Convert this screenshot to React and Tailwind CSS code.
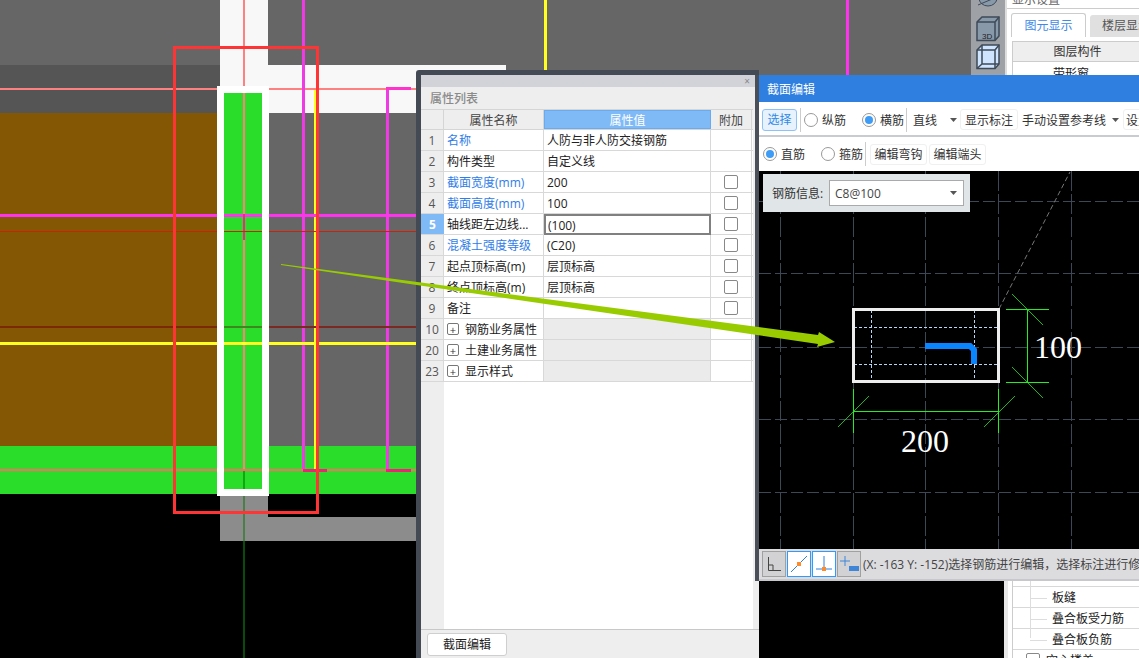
import React from "react";

const rows = [
  { no: 1, name: "名称", value: "人防与非人防交接钢筋", blue: true },
  { no: 2, name: "构件类型", value: "自定义线" },
  { no: 3, name: "截面宽度(mm)", value: "200", blue: true, check: true },
  { no: 4, name: "截面高度(mm)", value: "100", blue: true, check: true },
  { no: 5, name: "轴线距左边线...", value: "(100)", check: true, active: true },
  { no: 6, name: "混凝土强度等级", value: "(C20)", blue: true, check: true },
  { no: 7, name: "起点顶标高(m)", value: "层顶标高", check: true },
  { no: 8, name: "终点顶标高(m)", value: "层顶标高", check: true },
  { no: 9, name: "备注", value: "", check: true },
  { no: 10, name: "钢筋业务属性", group: true },
  { no: 20, name: "土建业务属性", group: true },
  { no: 23, name: "显示样式", group: true },
];

function Caret() {
  return (
    <svg width="7" height="4" viewBox="0 0 7 4" className="shrink-0">
      <path d="M0 0h7L3.5 4z" fill="#555" />
    </svg>
  );
}

function Radio({ checked, label, className }) {
  return (
    <>
      <span
        className={`flex w-[14px] h-[14px] shrink-0 items-center justify-center rounded-full border border-[#999] bg-white ${className}`}
      >
        {checked && <span className="w-[8px] h-[8px] rounded-full bg-[#3f9cf5]" />}
      </span>
      <span className="ml-[4px] w-[24px] shrink-0 pt-[2px] text-[#333]">{label}</span>
    </>
  );
}

function CadBackground() {
  return (
    <svg className="absolute inset-0" width="1139" height="658" viewBox="0 0 1139 658" shapeRendering="crispEdges">
      <rect x="0" y="0" width="1139" height="494" fill="#666666" />
      <rect x="0" y="65" width="220" height="48" fill="#555555" />
      <rect x="0" y="113" width="217" height="333" fill="#835703" />
      <rect x="220" y="0" width="48" height="113" fill="#f8f8f8" />
      <rect x="268" y="65" width="238" height="48" fill="#f8f8f8" />
      <rect x="0" y="446" width="1139" height="48" fill="#2bdd2b" />
      <rect x="0" y="494" width="1139" height="164" fill="#000000" />
      <rect x="220" y="494" width="48" height="47" fill="#8c8c8c" />
      <rect x="268" y="517" width="200" height="24" fill="#8c8c8c" />
      <rect x="243" y="494" width="2" height="47" fill="#4a7f4a" />
      <rect x="243" y="541" width="2" height="117" fill="#0a4a0a" />

      <rect x="0" y="88" width="416" height="2" fill="#ff8080" />
      <rect x="243" y="0" width="2" height="90" fill="#ff8080" />
      <rect x="302" y="0" width="3" height="470" fill="#f03ae6" />
      <rect x="386" y="89" width="3" height="381" fill="#f03ae6" />
      <rect x="386" y="87" width="25" height="3" fill="#ff33cc" />
      <rect x="314" y="90" width="3" height="380" fill="#ffff22" />
      <rect x="544" y="0" width="3" height="72" fill="#ffff22" />
      <rect x="846" y="0" width="3" height="76" fill="#ff33ee" />

      <rect x="217" y="86" width="52" height="7" fill="#ffffff" />
      <rect x="217" y="489" width="52" height="7" fill="#ffffff" />
      <rect x="224" y="93" width="38" height="396" fill="#2bdd2b" />
      <rect x="243" y="93" width="2" height="377" fill="#ff8080" />
      <rect x="243" y="470" width="2" height="19" fill="#0fa80f" />

      <rect x="0" y="214" width="416" height="3" fill="#ff33ee" />
      <rect x="243" y="214" width="2" height="26" fill="#ff1e8c" />
      <rect x="0" y="231" width="416" height="1" fill="#d02008" />
      <rect x="0" y="326" width="217" height="2" fill="#7a2a08" />
      <rect x="224" y="326" width="38" height="2" fill="#3b8a20" />
      <rect x="269" y="326" width="147" height="2" fill="#7a2a20" />
      <rect x="0" y="342" width="416" height="3" fill="#ffff22" />
      <rect x="0" y="469" width="416" height="2" fill="#ff6a6a" />
      <rect x="303" y="469" width="24" height="3" fill="#ee2277" />
      <rect x="386" y="469" width="25" height="3" fill="#ee2277" />

      <rect x="217" y="86" width="7" height="410" fill="#ffffff" />
      <rect x="262" y="86" width="7" height="410" fill="#ffffff" />

      <rect x="174.5" y="47.5" width="143" height="465" fill="none" stroke="#ff3535" strokeWidth="3" />
    </svg>
  );
}

function SectionDrawing() {
  const gridX = [780, 853, 925, 998, 1071];
  const gridY = [201, 273, 347, 419, 492];
  return (
    <svg className="block" width="380" height="378" viewBox="759 171 380 378">
      {gridX.map((x) => (
        <line key={x} x1={x + 0.5} y1="171" x2={x + 0.5} y2="549" stroke="#3d4856" strokeDasharray="20 3" />
      ))}
      {gridY.map((y) => (
        <line key={y} x1="759" y1={y + 0.5} x2="1139" y2={y + 0.5} stroke="#3d4856" strokeDasharray="12 4" />
      ))}
      <line x1="999" y1="309" x2="1070" y2="172" stroke="#777" strokeDasharray="5 3" />

      <line x1="871.5" y1="310" x2="871.5" y2="381" stroke="#b5d5f5" strokeDasharray="3 2" />
      <line x1="974.5" y1="310" x2="974.5" y2="381" stroke="#b5d5f5" strokeDasharray="3 2" />
      <line x1="854" y1="327.5" x2="998" y2="327.5" stroke="#b5d5f5" strokeDasharray="3 2" />
      <line x1="854" y1="364.5" x2="998" y2="364.5" stroke="#b5d5f5" strokeDasharray="3 2" />
      <rect x="853.5" y="309.5" width="145" height="72" fill="none" stroke="#eeeeee" strokeWidth="3" />
      <path d="M925 346H970L974 350V364" fill="none" stroke="#0a84ff" strokeWidth="6" />

      <g stroke="#22ee22" fill="none">
        <path d="M1006 309.5H1049M1006 382.5H1049M1027.5 309V382" />
        <path d="M1012 294L1043 325M1012 367L1043 398" strokeWidth="0.8" />
        <path d="M853.5 389V433M998.5 389V433M853 411.5H998" />
        <path d="M838 427L869 396M984 427L1015 396" strokeWidth="0.8" />
      </g>
      <text x="1034" y="358" fill="#ffffff" fontFamily="'Liberation Serif', serif" fontSize="32">100</text>
      <text x="901" y="452" fill="#ffffff" fontFamily="'Liberation Serif', serif" fontSize="32">200</text>
    </svg>
  );
}

function PropertyPanel() {
  return (
    <div className="absolute left-[416px] top-[70px] w-[343px] h-[588px] rounded-tl-[3px] bg-[#434a54] pl-[5px] pt-[5px]">
      <div className="flex h-full flex-col bg-[#eeeeee]">
        <div className="flex h-[12px] items-center justify-end bg-[#d1d3d8] pr-[9px] text-[10px] leading-none text-[#888]">
          ×
        </div>
        <div className="flex h-[22px] items-center pl-[9px] pt-[2px] font-medium text-[#8a8a8a]">属性列表</div>
        <div className="flex flex-1 flex-col w-[332px] bg-white">
          <div className="grid h-[21px] grid-cols-[23px_100px_167px_41px] grid-rows-[19px] border-y border-[#d5d5d5] bg-[#eeeeee] text-center leading-[21px] text-[#444]">
            <div className="border-r border-[#d5d5d5]" />
            <div className="border-r border-[#d5d5d5]">属性名称</div>
            <div className="border border-[#6aaaf0] bg-[#7fbaf7] leading-[19px] text-white">属性值</div>
            <div className="border-r border-[#d5d5d5]">附加</div>
          </div>
          {rows.map((row) => (
            <div
              key={row.no}
              className="grid h-[21px] grid-cols-[23px_100px_167px_41px] grid-rows-[20px] border-b border-[#d8d8d8] leading-[22px] text-[#222]"
            >
              <div
                className={
                  row.active
                    ? "bg-[#7fbaf7] text-center font-bold text-white"
                    : "bg-[#eeeeee] text-center text-[#555] border-r border-[#d8d8d8]"
                }
              >
                {row.no}
              </div>
              <div className={`flex items-center border-r border-[#d8d8d8] pl-[3px] whitespace-nowrap ${row.blue ? "text-[#2f7de8]" : ""}`}>
                {row.group && (
                  <span className="mr-[6px] flex h-[12px] w-[12px] shrink-0 items-center justify-center rounded-[2px] border border-[#777] text-[11px] leading-none text-[#333]">
                    +
                  </span>
                )}
                <span className="pt-[2px] leading-[18px]">{row.name}</span>
              </div>
              <div
                className={
                  row.active
                    ? "h-[21px] border-2 border-[#808080] pl-[2px] leading-[19px]"
                    : `border-r border-[#d8d8d8] pl-[3px] ${row.group ? "bg-[#ebebeb]" : ""}`
                }
              >
                {row.value}
              </div>
              <div className="flex items-center justify-center border-r border-[#d8d8d8]">
                {row.check && <span className="h-[14px] w-[14px] rounded-[2px] border border-[#888] bg-white" />}
              </div>
            </div>
          ))}
          <div className="flex-1 w-[23px] bg-[#eeeeee]" />
        </div>
        <div className="h-[29px] border-t border-[#c8c8c8] pl-[6px] pt-[3px]">
          <button className="h-[23px] w-[80px] rounded-[3px] border border-[#cfcfcf] bg-white text-[12px] text-[#222]">
            截面编辑
          </button>
        </div>
      </div>
    </div>
  );
}

function StatusButton({ active, children }) {
  return (
    <div
      className={`flex h-[26px] w-[24px] shrink-0 items-center justify-center border mr-px ${
        active ? "border-[#2f9bff] bg-white" : "border-[#a0a0a0] bg-[#d2d2d4]"
      }`}
    >
      {children}
    </div>
  );
}

function SectionWindow() {
  return (
    <div className="absolute left-[755px] top-[75px] flex h-[506px] w-[384px] flex-col overflow-hidden border-l-4 border-[#4a5058]">
      <div className="flex h-[27px] shrink-0 items-center bg-[#2f7fe0] pl-[8px] pt-[2px] text-white">截面编辑</div>

      <div className="flex h-[35px] shrink-0 items-center border-b-2 border-[#c8ccd0] bg-white pl-[3px] pt-[2px] whitespace-nowrap">
        <button className="h-[22px] w-[35px] shrink-0 rounded-[3px] border border-[#8cc2f5] bg-[#e8f2fc] pt-px text-[12px] text-[#2f8ae8]">
          选择
        </button>
        <span className="ml-[3px] h-[24px] w-px shrink-0 bg-[#ccc]" />
        <Radio className="ml-[3px]" label="纵筋" />
        <Radio className="ml-[16px]" checked label="横筋" />
        <span className="ml-[2px] h-[24px] w-px shrink-0 bg-[#ccc]" />
        <span className="ml-[3px] w-[38px] shrink-0 pl-[3px] pt-[2px] text-[#333]">直线</span>
        <span className="ml-[2px] mr-[3px]"><Caret /></span>
        <span className="flex h-[21px] w-[58px] shrink-0 items-center justify-center rounded-[3px] border border-[#f0f0f0] pt-[2px] text-[#333]">显示标注</span>
        <span className="ml-[4px] w-[84px] shrink-0 pt-[2px] text-[#333]">手动设置参考线</span>
        <span className="ml-[6px] mr-[4px]"><Caret /></span>
        <span className="flex h-[21px] flex-1 items-center rounded-[3px] border border-[#f0f0f0] pl-[2px] pt-[2px] text-[#333]">设置</span>
      </div>

      <div className="flex h-[34px] shrink-0 items-center bg-white pl-[4px] whitespace-nowrap">
        <Radio checked label="直筋" />
        <Radio className="ml-[16px]" label="箍筋" />
        <span className="ml-[2px] h-[24px] w-px shrink-0 bg-[#ccc]" />
        <span className="ml-[4px] flex h-[21px] w-[57px] shrink-0 items-center justify-center rounded-[3px] border border-[#f0f0f0] pt-[2px] text-[#333]">编辑弯钩</span>
        <span className="ml-[2px] flex h-[21px] w-[57px] shrink-0 items-center justify-center rounded-[3px] border border-[#f0f0f0] pt-[2px] text-[#333]">编辑端头</span>
      </div>

      <div className="relative flex-1 bg-black">
        <SectionDrawing />
        <div className="absolute left-[4px] top-[3px] flex h-[38px] w-[207px] items-center bg-[#e0e6e8] pl-[9px]">
          <span className="w-[57px] shrink-0 pt-[2px] text-[#333]">钢筋信息:</span>
          <div className="flex h-[26px] w-[135px] items-center justify-between border border-[#aaa] bg-white pl-[5px] pr-[6px] text-[#444]">
            <span className="pt-[2px]">C8@100</span>
            <Caret />
          </div>
        </div>
      </div>

      <div className="flex h-[32px] shrink-0 items-center border-b-2 border-[#c8c8cc] bg-[#dcdcdf] pl-[3px] whitespace-nowrap text-[#444]">
        <StatusButton>
          <svg width="16" height="16" viewBox="0 0 16 16" fill="none" stroke="#444">
            <path d="M2.5 1V14.5H15M2.5 9H7V14.5" />
          </svg>
        </StatusButton>
        <StatusButton active>
          <svg width="18" height="18" viewBox="0 0 18 18" fill="none">
            <path d="M1 17L17 1" stroke="#2f7fe0" />
            <rect x="7" y="7" width="4" height="4" fill="#ff8a2a" />
          </svg>
        </StatusButton>
        <StatusButton active>
          <svg width="18" height="16" viewBox="0 0 18 16" fill="none">
            <path d="M9 0V13M1 13H17" stroke="#2f7fe0" />
            <rect x="7" y="11" width="4" height="4" fill="#ff8a2a" />
          </svg>
        </StatusButton>
        <StatusButton>
          <svg width="20" height="18" viewBox="0 0 20 18" fill="none">
            <path d="M6 1V11M1 6H11" stroke="#3f86d8" />
            <rect x="10" y="11" width="10" height="5" fill="#3f86d8" />
          </svg>
        </StatusButton>
        <span className="ml-px pt-[2px]">(X: -163 Y: -152)选择钢筋进行编辑，选择标注进行修改</span>
      </div>
    </div>
  );
}

function DisplayPanel() {
  return (
    <div className="absolute left-[971px] top-0 flex h-[75px] w-[168px] overflow-hidden">
      <div className="flex w-[34px] shrink-0 flex-col items-center gap-[2px] bg-[#9ea2a6]">
        <svg width="26" height="14" viewBox="0 0 26 14" fill="none" stroke="#3e4a58">
          <ellipse cx="13" cy="-2" rx="9" ry="8" fill="#8899aa" />
          <path d="M3 5L22 -3" />
        </svg>
        <svg width="26" height="26" viewBox="0 0 26 26" stroke="#3e4a58" strokeWidth="1.5">
          <path d="M2 6L7 1H24V20L20 24.5H2Z" fill="#8899aa" />
          <path d="M2 6H20V24.5M20 6L24 1" fill="none" />
          <text x="7" y="22.5" fontSize="8" fill="#222" stroke="none" fontFamily="'Liberation Sans', sans-serif">3D</text>
        </svg>
        <svg width="26" height="26" viewBox="0 0 26 26" stroke="#3e4a58" strokeWidth="1.5" fill="none">
          <path d="M2 6L7 1H24V20L20 24.5H2Z" fill="#cfe4ff" />
          <path d="M2 6H20V24.5M20 6L24 1M7 1V20H24M7 20L2 24.5" />
        </svg>
      </div>
      <div className="flex-1 border-l-2 border-[#ddd] bg-white text-[#444]">
        <div className="h-[9px] border-b border-[#ccc] pl-[5px] text-[#666] leading-[0px]">显示设置</div>
        <div className="mt-[4px] flex h-[24px] items-end gap-[4px] pl-[4px] whitespace-nowrap">
          <div className="flex h-[24px] w-[75px] shrink-0 items-center justify-center rounded-t-[3px] border border-b-0 border-[#ccc] text-[#3f8ae8]">
            图元显示
          </div>
          <div className="flex h-[22px] flex-1 items-center rounded-t-[3px] bg-[#e0e0e0] pl-[12px] text-[#555]">
            楼层显示
          </div>
        </div>
        <div className="ml-[5px] mt-[4px] border-l border-[#ccc]">
          <div className="flex h-[21px] items-center justify-center border-y border-[#ccc] bg-[#eeeeee] pr-[8px] text-[#333]">
            图层构件
          </div>
          <div className="h-[14px] pl-[40px] leading-[24px] text-[#222]">带形窗</div>
        </div>
      </div>
    </div>
  );
}

function TreePanel() {
  const items = ["板缝", "叠合板受力筋", "叠合板负筋"];
  return (
    <div className="absolute left-[1004px] top-[581px] h-[77px] w-[135px] overflow-hidden border-l-4 border-[#e8e8e8] bg-white text-[#222]">
      <div className="ml-[4px] h-full border-l border-[#ccc]">
        <div className="h-[6px] overflow-hidden border-b border-[#d8d8d8] pl-[39px] whitespace-nowrap">
          <div className="-mt-[14px] leading-[16px]">叠合板(预制底板)</div>
        </div>
        <div className="absolute left-[22px] top-0 h-[57px] w-px bg-[#dddddd]" />
        {items.map((item) => (
          <div key={item} className="flex h-[21px] items-center border-b border-[#d8d8d8] pl-[39px] pt-[2px]">
            <span className="absolute left-[22px] h-px w-[17px] bg-[#dddddd]" />
            {item}
          </div>
        ))}
        <div className="flex h-[21px] items-start pl-[13px] pt-[3px]">
          <span className="h-[14px] w-[14px] rounded-[2px] border border-[#888]" />
          <span className="ml-[6px] leading-[16px]">空心楼盖</span>
        </div>
      </div>
    </div>
  );
}

export default function App() {
  return (
    <div className="relative h-[658px] w-[1139px] overflow-hidden bg-black font-['Open_Sans','Noto_Sans_CJK_SC',sans-serif] text-[12px]">
      <CadBackground />
      <DisplayPanel />
      <TreePanel />
      <PropertyPanel />
      <SectionWindow />
      <svg className="pointer-events-none absolute inset-0" width="1139" height="658" viewBox="0 0 1139 658">
        <polygon points="281,264 818,335 819,332 835,342 817,347 818,344 281,265" fill="#99cc00" />
      </svg>
    </div>
  );
}
